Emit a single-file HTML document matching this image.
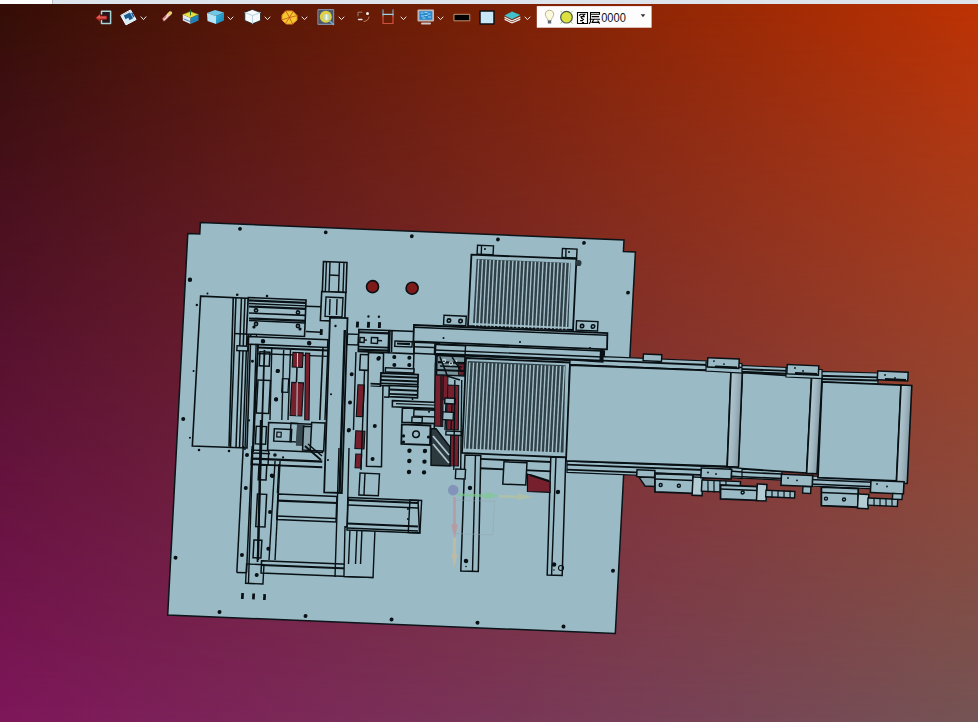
<!DOCTYPE html>
<html><head><meta charset="utf-8">
<style>
html,body{margin:0;padding:0;width:978px;height:722px;overflow:hidden;}
body{position:relative;font-family:"Liberation Sans",sans-serif;}
#bg1{position:absolute;left:0;top:0;width:978px;height:722px;background:linear-gradient(to right,#340e06,#be3204);}
#bg2{position:absolute;left:0;top:0;width:978px;height:722px;background:linear-gradient(to right,#7e165a,#745454);-webkit-mask-image:linear-gradient(to bottom,transparent,#000);mask-image:linear-gradient(to bottom,transparent,#000);}
#strip{position:absolute;left:0;top:0;width:978px;height:4px;background:#dde4ec;}
#strip0{position:absolute;left:0;top:0;width:52px;height:4px;background:#fdfdfd;border-right:1px solid #b8c4cc;}
svg{position:absolute;left:0;top:0;}
</style></head><body>
<div id="bg1"></div><div id="bg2"></div>
<div id="strip"></div><div id="strip0"></div>
<svg id="cad" width="978" height="722" viewBox="0 0 978 722">
<g transform="matrix(0.9991,0.0413,-0.0526,0.9987,188.4,222.0)" stroke="#0b1418" stroke-width="1.2" fill="none">
<path d="M12,0 L436,0 L436,11.5 L448,11.5 L448,393.5 L0,393.5 L0,11.6 L12,11.6 Z" fill="#9abac6" stroke-width="1.5"/>
<!--CAD-->
<defs><linearGradient id="rg" x1="0" y1="0" x2="1" y2="0"><stop offset="0" stop-color="#b2c8d0"/><stop offset="0.5" stop-color="#9fb6c0"/><stop offset="1" stop-color="#8299a4"/></linearGradient></defs>
<circle cx="51.9" cy="4.8" r="1.9" fill="#081014" stroke="none" stroke-width="0"/>
<circle cx="137.7" cy="4.7" r="1.9" fill="#081014" stroke="none" stroke-width="0"/>
<circle cx="223.9" cy="5" r="1.9" fill="#081014" stroke="none" stroke-width="0"/>
<circle cx="310.1" cy="4.7" r="1.9" fill="#081014" stroke="none" stroke-width="0"/>
<circle cx="396.2" cy="4.6" r="1.9" fill="#081014" stroke="none" stroke-width="0"/>
<circle cx="442.8" cy="52.5" r="1.9" fill="#081014" stroke="none" stroke-width="0"/>
<circle cx="4.6" cy="57.7" r="2.2" fill="#081014" stroke="none" stroke-width="0"/>
<circle cx="12.8" cy="82.6" r="1.2" fill="#081014" stroke="none" stroke-width="0"/>
<circle cx="52.6" cy="70.6" r="1.3" fill="#081014" stroke="none" stroke-width="0"/>
<circle cx="82.4" cy="70.7" r="1.3" fill="#081014" stroke="none" stroke-width="0"/>
<circle cx="22.8" cy="70.6" r="1" fill="#081014" stroke="none" stroke-width="0"/>
<circle cx="13" cy="148.7" r="1" fill="#081014" stroke="none" stroke-width="0"/>
<circle cx="5.2" cy="197" r="2" fill="#081014" stroke="none" stroke-width="0"/>
<circle cx="12.9" cy="215.5" r="1" fill="#081014" stroke="none" stroke-width="0"/>
<circle cx="22.6" cy="227.4" r="1.3" fill="#081014" stroke="none" stroke-width="0"/>
<circle cx="52.6" cy="227.1" r="1.3" fill="#081014" stroke="none" stroke-width="0"/>
<circle cx="71" cy="195.7" r="1.1" fill="#081014" stroke="none" stroke-width="0"/>
<circle cx="70.8" cy="230.4" r="2" fill="#081014" stroke="none" stroke-width="0"/>
<circle cx="96.9" cy="145.2" r="2" fill="#081014" stroke="none" stroke-width="0"/>
<circle cx="96.8" cy="173.8" r="2" fill="#081014" stroke="none" stroke-width="0"/>
<circle cx="97.2" cy="219.7" r="1.1" fill="#081014" stroke="none" stroke-width="0"/>
<circle cx="4.8" cy="335.9" r="2" fill="#081014" stroke="none" stroke-width="0"/>
<circle cx="51.6" cy="388.4" r="2" fill="#081014" stroke="none" stroke-width="0"/>
<circle cx="137.7" cy="388.8" r="2" fill="#081014" stroke="none" stroke-width="0"/>
<circle cx="223.8" cy="388.8" r="2" fill="#081014" stroke="none" stroke-width="0"/>
<circle cx="309.8" cy="388.4" r="2" fill="#081014" stroke="none" stroke-width="0"/>
<circle cx="395.9" cy="388.7" r="2" fill="#081014" stroke="none" stroke-width="0"/>
<circle cx="442.4" cy="330.9" r="2" fill="#081014" stroke="none" stroke-width="0"/>
<circle cx="71.3" cy="263.4" r="2" fill="#081014" stroke="none" stroke-width="0"/>
<circle cx="97.4" cy="250.3" r="2" fill="#081014" stroke="none" stroke-width="0"/>
<circle cx="96.8" cy="286.4" r="2" fill="#081014" stroke="none" stroke-width="0"/>
<circle cx="71" cy="330.5" r="2" fill="#081014" stroke="none" stroke-width="0"/>
<circle cx="97" cy="323.2" r="2" fill="#081014" stroke="none" stroke-width="0"/>
<circle cx="86.8" cy="349.9" r="2" fill="#081014" stroke="none" stroke-width="0"/>
<circle cx="141.3" cy="343.6" r="2" fill="#081014" stroke="none" stroke-width="0"/>
<circle cx="196.7" cy="330.3" r="2" fill="#081014" stroke="none" stroke-width="0"/>
<circle cx="186.8" cy="343.7" r="2" fill="#081014" stroke="none" stroke-width="0"/>
<rect x="72.3" y="368.5" width="2.7" height="5.9" fill="#081014" stroke="none"/>
<rect x="83.4" y="368.5" width="2.7" height="5.9" fill="#081014" stroke="none"/>
<rect x="94.4" y="368.6" width="2.7" height="5.9" fill="#081014" stroke="none"/>
<circle cx="187.3" cy="57" r="6" fill="#7e1a1a" stroke="#081014" stroke-width="1.6"/>
<circle cx="226.9" cy="56.9" r="6" fill="#7e1a1a" stroke="#081014" stroke-width="1.6"/>
<path d="M16.1,73.6 L67.5,73.8 L70.4,223.4 L15.7,223.6Z" stroke="#081014" stroke-width="1.6" fill="none"/>
<path d="M48.8,73.9 L52.4,222.6" stroke="#081014" stroke-width="1.6" fill="none"/>
<path d="M51.5,74 L53.9,223.1" stroke="#081014" stroke-width="1.5" fill="none"/>
<path d="M57,73.7 L59.4,222.8" stroke="#081014" stroke-width="1.5" fill="none"/>
<path d="M60.5,73.6 L62.9,222.7" stroke="#081014" stroke-width="1.5" fill="none"/>
<path d="M63.8,73.5 L66.2,222.6" stroke="#081014" stroke-width="1.5" fill="none"/>
<path d="M51.4,109.5 L66.4,109.6" stroke="#081014" stroke-width="1.6" fill="none"/>
<rect x="55.1" y="121.7" width="10.9" height="4.8" fill="#9abac6" stroke="#081014" stroke-width="1.4"/>
<path d="M66.6,221.5 L66.8,348.2" stroke="#081014" stroke-width="1.5" fill="none"/>
<path d="M75.5,221.2 L76.5,347.8" stroke="#081014" stroke-width="1.5" fill="none"/>
<path d="M66.8,348.2 L76.5,348.1" stroke="#081014" stroke-width="1.5" fill="none"/>
<path d="M73.8,105.1 L79,359.2" stroke="#081014" stroke-width="1.4" fill="none"/>
<path d="M63.8,73 L121.6,73.1 L122,109.6 L63.9,109.5Z" stroke="#081014" stroke-width="1.6" fill="#9abac6"/>
<path d="M64.7,75.9 L121.2,76" stroke="#081014" stroke-width="2.2" fill="none"/>
<path d="M64.8,78.9 L121.4,79" stroke="#081014" stroke-width="1.4" fill="none"/>
<path d="M65,81.9 L121.5,82" stroke="#081014" stroke-width="2.2" fill="none"/>
<path d="M65.3,88.4 L121.9,88.5" stroke="#081014" stroke-width="1.6" fill="none"/>
<path d="M65.6,93.9 L122.2,94" stroke="#081014" stroke-width="2.2" fill="none"/>
<path d="M65.7,95.9 L122.3,96" stroke="#081014" stroke-width="1.4" fill="none"/>
<circle cx="72.2" cy="85.6" r="2.4" fill="#081014" stroke="none" stroke-width="0"/>
<circle cx="72.2" cy="85.6" r="0.8" fill="#9abac6" stroke="none" stroke-width="0"/>
<circle cx="114.2" cy="85.9" r="2.4" fill="#081014" stroke="none" stroke-width="0"/>
<circle cx="114.2" cy="85.9" r="0.8" fill="#9abac6" stroke="none" stroke-width="0"/>
<circle cx="72.9" cy="99.1" r="2.4" fill="#081014" stroke="none" stroke-width="0"/>
<circle cx="72.9" cy="99.1" r="0.8" fill="#9abac6" stroke="none" stroke-width="0"/>
<circle cx="114.9" cy="99.4" r="2.4" fill="#081014" stroke="none" stroke-width="0"/>
<circle cx="114.9" cy="99.4" r="0.8" fill="#9abac6" stroke="none" stroke-width="0"/>
<circle cx="71" cy="102.2" r="1.6" fill="#081014" stroke="none" stroke-width="0"/>
<circle cx="117.1" cy="102.3" r="1.6" fill="#081014" stroke="none" stroke-width="0"/>
<path d="M121.9,79.3 L137.4,79.2" stroke="#081014" stroke-width="1.4" fill="none"/>
<path d="M123.2,104.5 L138.2,104.7" stroke="#081014" stroke-width="1.4" fill="none"/>
<rect x="137.1" y="101.5" width="2.8" height="5.9" fill="#081014" stroke="none"/>
<path d="M137,33.9 L160.5,33.9 L161.1,63.9 L137.4,63.9Z" stroke="#081014" stroke-width="1.6" fill="#9abac6"/>
<path d="M140,34.3 L140.4,63.8" stroke="#081014" stroke-width="1.4" fill="none"/>
<path d="M143.5,34.1 L144.1,63.6" stroke="#081014" stroke-width="1.4" fill="none"/>
<path d="M153,34.2 L153.6,63.7" stroke="#081014" stroke-width="1.4" fill="none"/>
<path d="M157.5,34 L158.1,63.6" stroke="#081014" stroke-width="1.4" fill="none"/>
<path d="M143.2,47.1 L153.2,47.2" stroke="#081014" stroke-width="1.4" fill="none"/>
<path d="M136.8,63.9 L160.9,63.9 L161.4,93 L137,93Z" stroke="#081014" stroke-width="1.6" fill="#9abac6"/>
<rect x="141.4" y="69.3" width="17" height="19.3" fill="none" stroke="#081014" stroke-width="1.4"/>
<path d="M145.5,71.1 L145.8,87.1" stroke="#081014" stroke-width="1.4" fill="none"/>
<path d="M152.5,70.8 L152.8,86.8" stroke="#081014" stroke-width="1.4" fill="none"/>
<path d="M146.4,89.6 L164,89.5 L167.5,264.4 L149.8,264.5Z" stroke="#081014" stroke-width="1.8" fill="#9abac6"/>
<path d="M161.9,101.4 L165.2,264.5" stroke="#081014" stroke-width="2.4" fill="none"/>
<circle cx="152.4" cy="97.8" r="1.2" fill="#081014" stroke="none" stroke-width="0"/>
<path d="M65.5,111.9 L145.6,111.9 L145.6,119.6 L65.6,119.6Z" stroke="#081014" stroke-width="1.6" fill="#9abac6"/>
<path d="M75.7,122.5 L146.2,122.5" stroke="#081014" stroke-width="2" fill="none"/>
<path d="M76,128.5 L146.5,128.5" stroke="#081014" stroke-width="1.4" fill="none"/>
<circle cx="80.8" cy="116" r="2.3" fill="#081014" stroke="none" stroke-width="0"/>
<circle cx="127" cy="116" r="2.3" fill="#081014" stroke="none" stroke-width="0"/>
<rect x="78.3" y="126.7" width="10" height="14" fill="none" stroke="#081014" stroke-width="1.5"/>
<rect x="77.8" y="154.9" width="12.5" height="33.1" fill="none" stroke="#081014" stroke-width="1.5"/>
<rect x="83.3" y="239.9" width="7.8" height="14.7" fill="none" stroke="#081014" stroke-width="1.5"/>
<rect x="83.3" y="268.9" width="9.2" height="32.7" fill="none" stroke="#081014" stroke-width="1.5"/>
<rect x="82.2" y="315" width="7.9" height="17.7" fill="none" stroke="#081014" stroke-width="1.5"/>
<path d="M82.7,124.7 L86.9,336.8" stroke="#081014" stroke-width="1.8" fill="none"/>
<path d="M66.2,110.4 L68.5,225.5" stroke="#081014" stroke-width="1.4" fill="none"/>
<path d="M76,120 L76.6,227.1" stroke="#081014" stroke-width="1.9" fill="none"/>
<path d="M89.9,121.4 L91.9,194.5" stroke="#081014" stroke-width="1.4" fill="none"/>
<path d="M101.9,124 L103.7,194" stroke="#081014" stroke-width="1.4" fill="none"/>
<path d="M108.7,123.7 L109.9,193.7" stroke="#081014" stroke-width="1.4" fill="none"/>
<rect x="102.1" y="152.6" width="6.3" height="13.5" fill="none" stroke="#081014" stroke-width="1.2"/>
<rect x="111.3" y="126" width="10.2" height="14.6" fill="#76202e" stroke="none"/>
<rect x="111.3" y="126" width="10.2" height="14.6" fill="none" stroke="#081014" stroke-width="1.1"/>
<rect x="111.7" y="156" width="11.7" height="33.2" fill="#76202e" stroke="none"/>
<rect x="111.7" y="156" width="11.7" height="33.2" fill="none" stroke="#081014" stroke-width="1.1"/>
<path d="M115.9,126.4 L118.5,189.4" stroke="#c8d8dc" stroke-width="0.9" fill="none"/>
<path d="M116.1,140.4 L116.4,155.4" stroke="#081014" stroke-width="1.6" fill="none"/>
<path d="M123.8,126 L128.1,126.1 L130.9,192.8 L126.6,192.8Z" stroke="#081014" stroke-width="1.1" fill="#76202e"/>
<path d="M141,119.3 L141.6,192.4" stroke="#081014" stroke-width="1.6" fill="none"/>
<path d="M146,119.1 L146.8,192.2" stroke="#081014" stroke-width="1.4" fill="none"/>
<circle cx="71.3" cy="136.4" r="1.5" fill="#081014" stroke="none" stroke-width="0"/>
<circle cx="97.3" cy="145.2" r="2" fill="#081014" stroke="none" stroke-width="0"/>
<circle cx="97" cy="173.4" r="2" fill="#081014" stroke="none" stroke-width="0"/>
<circle cx="151.5" cy="166.2" r="1" fill="#081014" stroke="none" stroke-width="0"/>
<path d="M90.7,197 L145.7,197 L146,224.7 L91.1,224.6Z" stroke="#081014" stroke-width="1.6" fill="#9abac6"/>
<rect x="96.7" y="203" width="17.4" height="12.4" fill="none" stroke="#081014" stroke-width="1.5"/>
<rect x="99.5" y="206.2" width="4.3" height="4.8" fill="none" stroke="#081014" stroke-width="1.2"/>
<rect x="113" y="196.6" width="7" height="18.7" fill="none" stroke="#081014" stroke-width="1.4"/>
<rect x="119.1" y="197.3" width="7.6" height="21.7" fill="#3a4a52" stroke="none"/>
<path d="M125.8,199.3 L137.2,199.3 L137.5,223.1 L126,223.1Z" stroke="#081014" stroke-width="1.5" fill="#8aa4ae"/>
<rect x="133.7" y="195.2" width="13.4" height="28" fill="#9abac6" stroke="#081014" stroke-width="1.5"/>
<path d="M128.2,219 L145,232.3" stroke="#081014" stroke-width="1.9" fill="none"/>
<path d="M131.1,216.9 L145.7,228.3" stroke="#081014" stroke-width="1.4" fill="none"/>
<circle cx="98.7" cy="229.2" r="1.8" fill="#081014" stroke="none" stroke-width="0"/>
<circle cx="106.9" cy="231.3" r="1.1" fill="#081014" stroke="none" stroke-width="0"/>
<circle cx="96.6" cy="249.8" r="2" fill="#081014" stroke="none" stroke-width="0"/>
<circle cx="151.9" cy="232" r="1" fill="#081014" stroke="none" stroke-width="0"/>
<circle cx="170.9" cy="201.8" r="1.8" fill="#081014" stroke="none" stroke-width="0"/>
<path d="M75.7,228.2 L93.7,228.2" stroke="#081014" stroke-width="1.5" fill="none"/>
<rect x="78.5" y="201.2" width="10.3" height="17.7" fill="none" stroke="#081014" stroke-width="1.5"/>
<path d="M82.9,194.8 L87.3,334.8" stroke="#081014" stroke-width="2.2" fill="none"/>
<rect x="75.5" y="225.2" width="16.8" height="14.3" fill="none" stroke="#081014" stroke-width="1.4"/>
<path d="M76,233.8 L146.3,233.8" stroke="#081014" stroke-width="2.2" fill="none"/>
<path d="M76.3,239.5 L146.6,239.5" stroke="#081014" stroke-width="1.8" fill="none"/>
<path d="M103.2,238 L103.2,267.1" stroke="#081014" stroke-width="1.5" fill="none"/>
<path d="M103.8,268.1 L162.8,268.1 L163.2,293.6 L103.9,293.6Z" stroke="#081014" stroke-width="1.5" fill="#9abac6"/>
<path d="M104.1,274.6 L163.2,274.6" stroke="#081014" stroke-width="2.2" fill="none"/>
<path d="M104,290.1 L163,290.1" stroke="#081014" stroke-width="1.4" fill="none"/>
<path d="M99.1,235.2 L98.3,334.4" stroke="#081014" stroke-width="1.4" fill="none"/>
<path d="M104.1,235 L104.3,334.1" stroke="#081014" stroke-width="1.4" fill="none"/>
<path d="M90.9,335.5 L202.4,335.4 L202.6,347.6 L91,347.7Z" stroke="#081014" stroke-width="1.5" fill="#9abac6"/>
<path d="M91.1,339.7 L202.6,339.6" stroke="#081014" stroke-width="1.9" fill="none"/>
<rect x="76.1" y="339.3" width="17.4" height="19.3" fill="none" stroke="#081014" stroke-width="1.4"/>
<rect x="164.9" y="105.3" width="11" height="10.6" fill="none" stroke="#081014" stroke-width="1.4"/>
<rect x="177.9" y="155.6" width="6.5" height="31.7" fill="#76202e" stroke="none"/>
<rect x="177.9" y="155.6" width="6.5" height="31.7" fill="none" stroke="#081014" stroke-width="1.1"/>
<rect x="178.2" y="201.7" width="9.1" height="17.8" fill="#76202e" stroke="none"/>
<rect x="178.2" y="201.7" width="9.1" height="17.8" fill="none" stroke="#081014" stroke-width="1.1"/>
<rect x="179.4" y="224.9" width="5.9" height="13.8" fill="#76202e" stroke="none"/>
<rect x="179.4" y="224.9" width="5.9" height="13.8" fill="none" stroke="#081014" stroke-width="1.1"/>
<circle cx="196.9" cy="196.1" r="2" fill="#081014" stroke="none" stroke-width="0"/>
<circle cx="196.4" cy="229.2" r="2" fill="#081014" stroke="none" stroke-width="0"/>
<rect x="184.6" y="243.7" width="19.5" height="22" fill="none" stroke="#081014" stroke-width="1.4"/>
<path d="M189.6,244.5 L189.7,265.5" stroke="#081014" stroke-width="1.4" fill="none"/>
<path d="M162.3,219.6 L165.1,348.6" stroke="#081014" stroke-width="1.4" fill="none"/>
<path d="M172.3,219.2 L175.9,348.2" stroke="#081014" stroke-width="1.4" fill="none"/>
<path d="M172.4,298 L202.5,298 L203.1,347.6 L174,347.8Z" stroke="#081014" stroke-width="1.4" fill="#9abac6"/>
<path d="M177.5,299.1 L177.9,335.1" stroke="#081014" stroke-width="1.4" fill="none"/>
<path d="M184.5,298.8 L184.9,334.8" stroke="#081014" stroke-width="1.4" fill="none"/>
<path d="M189.5,298.6 L189.9,334.6" stroke="#081014" stroke-width="1.4" fill="none"/>
<path d="M174.2,268.7 L244,268.8 L247.2,301.2 L174.6,301.2Z" stroke="#081014" stroke-width="1.5" fill="#9abac6"/>
<path d="M174.3,271.2 L244.1,271.3" stroke="#081014" stroke-width="1.9" fill="none"/>
<path d="M174.3,276.2 L244.4,276.3" stroke="#081014" stroke-width="1.4" fill="none"/>
<path d="M174.8,294.7 L245.3,294.8" stroke="#081014" stroke-width="1.9" fill="none"/>
<path d="M174.5,299.2 L245.6,299.2" stroke="#081014" stroke-width="1.4" fill="none"/>
<rect x="235.9" y="268.6" width="11.7" height="32.6" fill="none" stroke="#081014" stroke-width="1.4"/>
<circle cx="234.4" cy="277.7" r="1" fill="#081014" stroke="none" stroke-width="0"/>
<circle cx="234.9" cy="287.7" r="1" fill="#081014" stroke="none" stroke-width="0"/>
<path d="M175.9,100.3 L205.9,100.2 L206.4,122.2 L176.5,122.3Z" stroke="#081014" stroke-width="1.6" fill="#9abac6"/>
<path d="M176.2,103.1 L206,103" stroke="#081014" stroke-width="2.2" fill="none"/>
<path d="M176.4,117.4 L206.4,117.3" stroke="#081014" stroke-width="1.6" fill="none"/>
<path d="M176.5,120.4 L206.4,120.3" stroke="#081014" stroke-width="2.2" fill="none"/>
<rect x="177.5" y="108.3" width="4.3" height="4.8" fill="none" stroke="#081014" stroke-width="1.4"/>
<path d="M181.6,110.6 L184.6,110.6" stroke="#081014" stroke-width="1.4" fill="none"/>
<rect x="188.9" y="107.8" width="6.3" height="5.7" fill="none" stroke="#081014" stroke-width="1.4"/>
<path d="M195.1,110.6 L199.6,110.6" stroke="#081014" stroke-width="1.4" fill="none"/>
<path d="M207,100.1 L231.4,100.1 L232,122.4 L207.6,122.4Z" stroke="#081014" stroke-width="1.6" fill="#9abac6"/>
<rect x="212.6" y="110.4" width="17.3" height="5.3" fill="none" stroke="#081014" stroke-width="1.4"/>
<path d="M214.7,112.8 L227.7,112.8" stroke="#081014" stroke-width="2.2" fill="none"/>
<path d="M209.1,100.5 L209.7,121.5" stroke="#081014" stroke-width="1.6" fill="none"/>
<path d="M231.9,110.8 L257.7,110.8" stroke="#081014" stroke-width="1.5" fill="none"/>
<path d="M231.9,115.2 L257.9,115.2" stroke="#081014" stroke-width="1.5" fill="none"/>
<path d="M232.2,121.9 L258.2,121.9" stroke="#081014" stroke-width="1.5" fill="none"/>
<path d="M231.9,109.6 L233.2,168.6" stroke="#081014" stroke-width="1.5" fill="none"/>
<path d="M253.6,110.7 L256.8,207.7" stroke="#081014" stroke-width="1.5" fill="none"/>
<path d="M174.2,123 L175.8,201" stroke="#081014" stroke-width="1.4" fill="none"/>
<rect x="178.8" y="125.2" width="9.1" height="15.6" fill="none" stroke="#081014" stroke-width="1.5"/>
<path d="M183.7,140.6 L185.4,240.7" stroke="#081014" stroke-width="1.4" fill="none"/>
<path d="M186.7,123 L201.8,123 L205.7,236.6 L190.7,236.6Z" stroke="#081014" stroke-width="1.5" fill="#9abac6"/>
<circle cx="197.5" cy="128" r="1.9" fill="#081014" stroke="none" stroke-width="0"/>
<circle cx="170.9" cy="173.7" r="2" fill="#081014" stroke="none" stroke-width="0"/>
<circle cx="171.3" cy="201.2" r="2" fill="#081014" stroke="none" stroke-width="0"/>
<circle cx="196.9" cy="196.1" r="2" fill="#081014" stroke="none" stroke-width="0"/>
<circle cx="196.4" cy="229.2" r="2" fill="#081014" stroke="none" stroke-width="0"/>
<circle cx="196.9" cy="128.8" r="2" fill="#081014" stroke="none" stroke-width="0"/>
<circle cx="212.7" cy="126.5" r="2" fill="#081014" stroke="none" stroke-width="0"/>
<circle cx="227.8" cy="126.5" r="2" fill="#081014" stroke="none" stroke-width="0"/>
<circle cx="213.2" cy="134.3" r="2" fill="#081014" stroke="none" stroke-width="0"/>
<circle cx="228.1" cy="133.8" r="2" fill="#081014" stroke="none" stroke-width="0"/>
<circle cx="171.1" cy="145.4" r="2" fill="#081014" stroke="none" stroke-width="0"/>
<rect x="204.5" y="137.4" width="28.6" height="4.3" fill="#9abac6" stroke="#081014" stroke-width="1.5"/>
<path d="M200.3,142.9 L237.5,142.9 L237.7,155.2 L200.4,155.2Z" stroke="#081014" stroke-width="1.8" fill="#9abac6"/>
<path d="M200.5,146.1 L237.7,146.1" stroke="#081014" stroke-width="2" fill="none"/>
<path d="M200.7,149.9 L237.9,149.9" stroke="#081014" stroke-width="2" fill="none"/>
<path d="M200.8,153.1 L237.9,153" stroke="#081014" stroke-width="1.6" fill="none"/>
<path d="M190.4,154 L200.9,154" stroke="#081014" stroke-width="1.8" fill="none"/>
<path d="M190.5,156.3 L201,156.3" stroke="#081014" stroke-width="1.1" fill="none"/>
<path d="M209.3,155.1 L237.8,155.1 L238.1,166.2 L209.5,166.2Z" stroke="#081014" stroke-width="1.6" fill="#9abac6"/>
<path d="M209.6,159.1 L237.8,159.1" stroke="#081014" stroke-width="2" fill="none"/>
<path d="M209.6,163.4 L237.9,163.4" stroke="#081014" stroke-width="1.8" fill="none"/>
<path d="M204.6,166.8 L209.6,166.8" stroke="#081014" stroke-width="1.6" fill="none"/>
<path d="M213.2,170 L259.4,170 L259.5,176.1 L213.4,176.2Z" stroke="#081014" stroke-width="1.6" fill="#9abac6"/>
<path d="M216.9,172.8 L257.9,172.8" stroke="#081014" stroke-width="1.2" fill="none"/>
<path d="M223.5,177 L257.1,176.9 L257.4,191.2 L223.8,191.3Z" stroke="#081014" stroke-width="1.6" fill="#9abac6"/>
<rect x="235.2" y="178" width="22.4" height="6.6" fill="none" stroke="#081014" stroke-width="1.4"/>
<circle cx="250.3" cy="179.7" r="1" fill="#081014" stroke="none" stroke-width="0"/>
<rect x="233.6" y="185.6" width="10.3" height="5.6" fill="none" stroke="#081014" stroke-width="1.4"/>
<path d="M223.8,193.3 L252.5,193.3 L253,212.8 L224.3,212.8Z" stroke="#081014" stroke-width="1.8" fill="#9abac6"/>
<circle cx="238.5" cy="202.6" r="3.3" fill="none" stroke="#081014" stroke-width="1.5"/>
<circle cx="226.1" cy="204.9" r="1.6" fill="#081014" stroke="none" stroke-width="0"/>
<circle cx="226.4" cy="210.9" r="1.6" fill="#081014" stroke="none" stroke-width="0"/>
<circle cx="251.1" cy="204.9" r="1.6" fill="#081014" stroke="none" stroke-width="0"/>
<circle cx="232.8" cy="219.4" r="2.2" fill="#081014" stroke="none" stroke-width="0"/>
<circle cx="248.3" cy="219" r="2.2" fill="#081014" stroke="none" stroke-width="0"/>
<circle cx="233.2" cy="229.7" r="2.2" fill="#081014" stroke="none" stroke-width="0"/>
<circle cx="248.4" cy="229.7" r="2.2" fill="#081014" stroke="none" stroke-width="0"/>
<circle cx="233.5" cy="240.7" r="2.2" fill="#081014" stroke="none" stroke-width="0"/>
<circle cx="248.5" cy="240.4" r="2.2" fill="#081014" stroke="none" stroke-width="0"/>
<path d="M254,131.1 L262.1,131.1 L264.8,193.7 L256.6,193.7Z" stroke="#081014" stroke-width="1.1" fill="#76202e"/>
<path d="M266.8,152.2 L278.6,152.2 L280.5,196.7 L268.8,196.7Z" stroke="#081014" stroke-width="1.1" fill="#76202e"/>
<path d="M273.1,202 L281.2,201.9 L282.4,232.6 L274.3,232.7Z" stroke="#081014" stroke-width="1.1" fill="#76202e"/>
<path d="M262.8,143.3 L267.4,143.3 L268.1,167.1 L263.6,167.1Z" stroke="#081014" stroke-width="0.8" fill="#76202e"/>
<path d="M255.3,123.1 L283.3,123.2 L283.8,142.5 L255.8,142.4Z" stroke="#081014" stroke-width="1.6" fill="#7c96a0"/>
<path d="M277.3,130.7 L282.7,130.7 L283.1,141.5 L277.7,141.5Z" stroke="#081014" stroke-width="0.8" fill="#76202e"/>
<path d="M256.6,129.6 L282.7,129.5" stroke="#081014" stroke-width="2.2" fill="none"/>
<path d="M258.9,133.5 L280.9,133.6" stroke="#081014" stroke-width="1.6" fill="none"/>
<path d="M256.1,137.6 L283.1,137.5" stroke="#081014" stroke-width="1.9" fill="none"/>
<circle cx="262.6" cy="128.3" r="1.6" fill="none" stroke="#c0d4da" stroke-width="1.1"/>
<circle cx="269.7" cy="130.5" r="1.6" fill="none" stroke="#c0d4da" stroke-width="1.1"/>
<circle cx="274.6" cy="127.8" r="1.3" fill="#c0d4da" stroke="none" stroke-width="0"/>
<path d="M258.4,124.5 L266.3,142.2" stroke="#081014" stroke-width="1.6" fill="none"/>
<path d="M270.4,124 L281.1,138.6" stroke="#081014" stroke-width="1.4" fill="none"/>
<path d="M266.4,143.2 L279.6,146.6" stroke="#081014" stroke-width="1.6" fill="none"/>
<path d="M260.4,143.4 L263,193.4" stroke="#081014" stroke-width="1.2" fill="none"/>
<rect x="265.5" y="165.2" width="10.3" height="5.6" fill="#9abac6" stroke="#081014" stroke-width="1.4"/>
<path d="M266.8,171.2 L267.2,197.2" stroke="#081014" stroke-width="1.4" fill="none"/>
<path d="M272.8,171 L273.2,197" stroke="#081014" stroke-width="1.2" fill="none"/>
<rect x="264.3" y="179.3" width="10.4" height="7.6" fill="#9abac6" stroke="#081014" stroke-width="1.2"/>
<rect x="268.3" y="198.2" width="15.9" height="3.8" fill="#9abac6" stroke="#081014" stroke-width="1.4"/>
<path d="M253.2,196.4 L258.2,196.4 L273.1,214 L274.1,233 L255.1,233Z" stroke="#081014" stroke-width="1.4" fill="#2c3a40"/>
<path d="M255.5,203.7 L272.5,222" stroke="#b0c6ce" stroke-width="1.8" fill="none"/>
<path d="M256,211.7 L272.9,230" stroke="#b0c6ce" stroke-width="1.8" fill="none"/>
<path d="M274.4,146.9 L278.1,236.8" stroke="#081014" stroke-width="1.4" fill="none"/>
<path d="M281.3,146.6 L285,236.5" stroke="#081014" stroke-width="1.4" fill="none"/>
<rect x="177" y="99.8" width="30.2" height="21.8" fill="none" stroke="none" stroke-width="0"/>
<rect x="172.8" y="92.5" width="2.9" height="5.9" fill="#081014" stroke="none"/>
<rect x="183.8" y="92.3" width="2.9" height="5.9" fill="#081014" stroke="none"/>
<rect x="194.8" y="92.1" width="2.9" height="5.9" fill="#081014" stroke="none"/>
<circle cx="184.8" cy="87" r="1.2" fill="#081014" stroke="none" stroke-width="0"/>
<circle cx="195.3" cy="86.8" r="1.2" fill="#081014" stroke="none" stroke-width="0"/>
<rect x="260.2" y="82.7" width="22.3" height="9.6" fill="none" stroke="#081014" stroke-width="1.4"/>
<circle cx="265.4" cy="87.7" r="2.5" fill="#081014" stroke="none" stroke-width="0"/>
<circle cx="277" cy="87.7" r="2.5" fill="#081014" stroke="none" stroke-width="0"/>
<circle cx="265.4" cy="87.7" r="0.9" fill="#9abac6" stroke="none" stroke-width="0"/>
<circle cx="277" cy="87.7" r="0.9" fill="#9abac6" stroke="none" stroke-width="0"/>
<rect x="392.9" y="82.7" width="21.4" height="9.3" fill="none" stroke="#081014" stroke-width="1.4"/>
<circle cx="398.6" cy="87.7" r="2.5" fill="#081014" stroke="none" stroke-width="0"/>
<circle cx="409.6" cy="87.7" r="2.5" fill="#081014" stroke="none" stroke-width="0"/>
<circle cx="398.6" cy="87.7" r="0.9" fill="#9abac6" stroke="none" stroke-width="0"/>
<circle cx="409.6" cy="87.7" r="0.9" fill="#9abac6" stroke="none" stroke-width="0"/>
<path d="M284.4,21 L389.5,20.9 L389.8,92 L284.7,92.2Z" stroke="#081014" stroke-width="1.8" fill="#9abac6"/>
<path d="M289.8,25.1 L383.8,25.2 L385.1,89.2 L289.6,89.2Z" stroke="none" stroke-width="0" fill="#2e4048"/>
<path d="M292,25.5 L292.1,92.1" stroke="#a8c0ca" stroke-width="1.4" fill="none"/>
<path d="M295.8,25.5 L295.9,92" stroke="#a8c0ca" stroke-width="1.4" fill="none"/>
<path d="M299.6,25.5 L299.7,92" stroke="#a8c0ca" stroke-width="1.4" fill="none"/>
<path d="M303.4,25.5 L303.5,92" stroke="#a8c0ca" stroke-width="1.4" fill="none"/>
<path d="M307.1,25.4 L307.2,92" stroke="#a8c0ca" stroke-width="1.4" fill="none"/>
<path d="M310.9,25.4 L311,92" stroke="#a8c0ca" stroke-width="1.4" fill="none"/>
<path d="M314.7,25.4 L314.8,92" stroke="#a8c0ca" stroke-width="1.4" fill="none"/>
<path d="M318.5,25.4 L318.6,92" stroke="#a8c0ca" stroke-width="1.4" fill="none"/>
<path d="M322.3,25.4 L322.4,92" stroke="#a8c0ca" stroke-width="1.4" fill="none"/>
<path d="M326.1,25.4 L326.2,92" stroke="#a8c0ca" stroke-width="1.4" fill="none"/>
<path d="M329.8,25.4 L329.9,92" stroke="#a8c0ca" stroke-width="1.4" fill="none"/>
<path d="M333.6,25.4 L333.7,92" stroke="#a8c0ca" stroke-width="1.4" fill="none"/>
<path d="M337.4,25.4 L337.5,92" stroke="#a8c0ca" stroke-width="1.4" fill="none"/>
<path d="M341.2,25.4 L341.3,92" stroke="#a8c0ca" stroke-width="1.4" fill="none"/>
<path d="M345,25.4 L345.1,92" stroke="#a8c0ca" stroke-width="1.4" fill="none"/>
<path d="M348.7,25.4 L348.9,92" stroke="#a8c0ca" stroke-width="1.4" fill="none"/>
<path d="M352.5,25.4 L352.6,92" stroke="#a8c0ca" stroke-width="1.4" fill="none"/>
<path d="M356.3,25.4 L356.4,91.9" stroke="#a8c0ca" stroke-width="1.4" fill="none"/>
<path d="M360.1,25.4 L360.2,91.9" stroke="#a8c0ca" stroke-width="1.4" fill="none"/>
<path d="M363.9,25.4 L364,91.9" stroke="#a8c0ca" stroke-width="1.4" fill="none"/>
<path d="M367.7,25.3 L367.8,91.9" stroke="#a8c0ca" stroke-width="1.4" fill="none"/>
<path d="M371.4,25.3 L371.5,91.9" stroke="#a8c0ca" stroke-width="1.4" fill="none"/>
<path d="M375.2,25.3 L375.3,91.9" stroke="#a8c0ca" stroke-width="1.4" fill="none"/>
<path d="M379,25.3 L379.1,91.9" stroke="#a8c0ca" stroke-width="1.4" fill="none"/>
<path d="M382.8,25.3 L382.9,91.9" stroke="#a8c0ca" stroke-width="1.4" fill="none"/>
<rect x="290" y="11.3" width="16" height="8.8" fill="none" stroke="#081014" stroke-width="1.4"/>
<rect x="375" y="11.1" width="14.6" height="8.8" fill="none" stroke="#081014" stroke-width="1.4"/>
<path d="M378.5,11.2 L378.8,20.4" stroke="#081014" stroke-width="1.4" fill="none"/>
<path d="M294,11.4 L294.2,20.6" stroke="#081014" stroke-width="1.4" fill="none"/>

<circle cx="391.8" cy="24.9" r="3" fill="#2a3a40" stroke="none" stroke-width="0"/>
<circle cx="297.6" cy="14.7" r="1" fill="#081014" stroke="none" stroke-width="0"/>
<circle cx="381.7" cy="14.3" r="1" fill="#081014" stroke="none" stroke-width="0"/>
<path d="M230.7,93.6 L424.3,93.6 L424.8,110 L231,110.1Z" stroke="#081014" stroke-width="1.8" fill="#9abac6"/>
<path d="M230.9,95.9 L424.4,95.9" stroke="#081014" stroke-width="1.4" fill="none"/>
<circle cx="260.9" cy="105.4" r="1" fill="#081014" stroke="none" stroke-width="0"/>
<circle cx="337.5" cy="106.2" r="1" fill="#081014" stroke="none" stroke-width="0"/>
<circle cx="407.7" cy="109.3" r="1" fill="#081014" stroke="none" stroke-width="0"/>
<path d="M252.7,111.7 L420.4,111.8 L420.4,121.3 L252.7,121.2Z" stroke="#081014" stroke-width="1.6" fill="#9abac6"/>
<path d="M253,117.7 L420.7,117.8" stroke="#081014" stroke-width="1.4" fill="none"/>
<path d="M253.3,122.2 L420.9,122.3" stroke="#081014" stroke-width="1.9" fill="none"/>
<rect x="253.5" y="112.2" width="29.8" height="10.3" fill="none" stroke="#081014" stroke-width="1.4"/>
<rect x="417.8" y="110.9" width="5.2" height="12.8" fill="#081014" stroke="none"/>
<path d="M284.4,124.4 L388.5,124.6 L391,219.6 L285.4,219.5Z" stroke="#081014" stroke-width="1.8" fill="#9abac6"/>
<path d="M286.4,127.3 L384.2,127.5 L386.7,214.8 L287,215Z" stroke="none" stroke-width="0" fill="#2e4048"/>
<path d="M288.4,128.8 L288.5,215.9" stroke="#a8c0ca" stroke-width="1.4" fill="none"/>
<path d="M292.2,128.7 L292.3,215.9" stroke="#a8c0ca" stroke-width="1.4" fill="none"/>
<path d="M296,128.7 L296.1,215.9" stroke="#a8c0ca" stroke-width="1.4" fill="none"/>
<path d="M299.8,128.7 L299.9,215.8" stroke="#a8c0ca" stroke-width="1.4" fill="none"/>
<path d="M303.6,128.7 L303.6,215.8" stroke="#a8c0ca" stroke-width="1.4" fill="none"/>
<path d="M307.3,128.7 L307.4,215.8" stroke="#a8c0ca" stroke-width="1.4" fill="none"/>
<path d="M311.1,128.7 L311.2,215.8" stroke="#a8c0ca" stroke-width="1.4" fill="none"/>
<path d="M314.9,128.7 L315,215.8" stroke="#a8c0ca" stroke-width="1.4" fill="none"/>
<path d="M318.7,128.7 L318.8,215.8" stroke="#a8c0ca" stroke-width="1.4" fill="none"/>
<path d="M322.5,128.7 L322.6,215.8" stroke="#a8c0ca" stroke-width="1.4" fill="none"/>
<path d="M326.3,128.7 L326.3,215.8" stroke="#a8c0ca" stroke-width="1.4" fill="none"/>
<path d="M330,128.7 L330.1,215.8" stroke="#a8c0ca" stroke-width="1.4" fill="none"/>
<path d="M333.8,128.7 L333.9,215.8" stroke="#a8c0ca" stroke-width="1.4" fill="none"/>
<path d="M337.6,128.7 L337.7,215.8" stroke="#a8c0ca" stroke-width="1.4" fill="none"/>
<path d="M341.4,128.7 L341.5,215.8" stroke="#a8c0ca" stroke-width="1.4" fill="none"/>
<path d="M345.2,128.7 L345.3,215.8" stroke="#a8c0ca" stroke-width="1.4" fill="none"/>
<path d="M349,128.7 L349,215.8" stroke="#a8c0ca" stroke-width="1.4" fill="none"/>
<path d="M352.7,128.6 L352.8,215.8" stroke="#a8c0ca" stroke-width="1.4" fill="none"/>
<path d="M356.5,128.6 L356.6,215.8" stroke="#a8c0ca" stroke-width="1.4" fill="none"/>
<path d="M360.3,128.6 L360.4,215.7" stroke="#a8c0ca" stroke-width="1.4" fill="none"/>
<path d="M364.1,128.6 L364.2,215.7" stroke="#a8c0ca" stroke-width="1.4" fill="none"/>
<path d="M367.9,128.6 L368,215.7" stroke="#a8c0ca" stroke-width="1.4" fill="none"/>
<path d="M371.7,128.6 L371.7,215.7" stroke="#a8c0ca" stroke-width="1.4" fill="none"/>
<path d="M375.4,128.6 L375.5,215.7" stroke="#a8c0ca" stroke-width="1.4" fill="none"/>
<path d="M379.2,128.6 L379.3,215.7" stroke="#a8c0ca" stroke-width="1.4" fill="none"/>
<path d="M383,128.6 L383.1,215.7" stroke="#a8c0ca" stroke-width="1.4" fill="none"/>
<path d="M288.5,221.4 L304.3,221.2 L307.9,337.2 L290.4,337.4Z" stroke="#081014" stroke-width="1.5" fill="#9abac6"/>
<path d="M299,221.9 L302.1,337" stroke="#081014" stroke-width="1.4" fill="none"/>
<circle cx="295.1" cy="327.2" r="2.3" fill="#081014" stroke="none" stroke-width="0"/>
<circle cx="295.4" cy="332.7" r="0.8" fill="#081014" stroke="none" stroke-width="0"/>
<path d="M374.3,219.8 L389.3,219.7 L391.9,337.8 L376.9,337.9Z" stroke="#081014" stroke-width="1.5" fill="#9abac6"/>
<path d="M379.5,220.1 L381.3,337.7" stroke="#081014" stroke-width="1.4" fill="none"/>
<circle cx="383.2" cy="327.1" r="2.3" fill="#081014" stroke="none" stroke-width="0"/>
<circle cx="383.4" cy="332.6" r="0.8" fill="#081014" stroke="none" stroke-width="0"/>
<circle cx="390.3" cy="330.3" r="2.5" fill="none" stroke="#081014" stroke-width="1.1"/>
<circle cx="295.2" cy="254.1" r="2.2" fill="#081014" stroke="none" stroke-width="0"/>
<circle cx="383.3" cy="254.5" r="2.2" fill="#081014" stroke="none" stroke-width="0"/>
<path d="M303.7,224.7 L374.8,224.8" stroke="#081014" stroke-width="1.8" fill="none"/>
<path d="M304.2,234 L375.3,234.1" stroke="#081014" stroke-width="1.8" fill="none"/>
<rect x="327.8" y="226.5" width="23" height="22.4" fill="#9abac6" stroke="#081014" stroke-width="1.5"/>
<path d="M351.9,237.8 L374.8,244.5 L375.4,255.3 L352.8,255.3Z" stroke="#081014" stroke-width="1.2" fill="#76202e"/>
<path d="M354.5,238.7 L373.8,243.9" stroke="#081014" stroke-width="1.9" fill="none"/>
<rect x="280.1" y="235.7" width="9.7" height="9.6" fill="#9abac6" stroke="#081014" stroke-width="1.4"/>
<path d="M421.1,117.3 L526.2,117.4 L526.7,126.9 L388.6,127.1 L388.4,122.1 L421.4,122.8Z" stroke="#081014" stroke-width="1.2" fill="#9abac6"/>
<path d="M421.4,121.3 L526.5,121.4" stroke="#081014" stroke-width="1.8" fill="none"/>
<path d="M388.6,127.1 L526.7,126.9" stroke="#081014" stroke-width="2" fill="none"/>
<path d="M557.4,120.6 L606,120.6 L606.5,130.1 L557.9,129.1Z" stroke="#081014" stroke-width="1.2" fill="#9abac6"/>
<path d="M557.6,124.1 L606.2,124.1" stroke="#081014" stroke-width="1.8" fill="none"/>
<path d="M557.8,126.9 L606.3,126.9" stroke="#081014" stroke-width="2" fill="none"/>
<path d="M637.2,123.3 L696.7,122.4 L697.2,133.4 L637.7,133.8Z" stroke="#081014" stroke-width="1.2" fill="#9abac6"/>
<path d="M637.4,127.6 L696.9,126.7" stroke="#081014" stroke-width="1.8" fill="none"/>
<path d="M637.6,130.8 L697.1,129.9" stroke="#081014" stroke-width="2" fill="none"/>
<path d="M390.7,223.2 L553.8,222.9 L554.4,234.4 L391.3,234.6Z" stroke="#081014" stroke-width="1.2" fill="#9abac6"/>
<path d="M390.9,226.7 L554,226.4" stroke="#081014" stroke-width="1.8" fill="none"/>
<path d="M391.1,231.8 L554.3,231.6" stroke="#081014" stroke-width="1.8" fill="none"/>
<path d="M561.9,224.1 L605.9,224.3 L606.4,233.3 L562.4,233.1Z" stroke="#081014" stroke-width="1.2" fill="#9abac6"/>
<path d="M562.1,227.1 L606.1,227.3" stroke="#081014" stroke-width="1.6" fill="none"/>
<path d="M562.3,231.6 L606.3,231.8" stroke="#081014" stroke-width="1.6" fill="none"/>
<path d="M634.2,228.1 L697.2,228.3 L697.8,238.3 L634.7,238.1Z" stroke="#081014" stroke-width="1.2" fill="#9abac6"/>
<path d="M634.4,231.6 L697.4,231.8" stroke="#081014" stroke-width="1.6" fill="none"/>
<path d="M634.6,236.1 L697.7,236.3" stroke="#081014" stroke-width="1.6" fill="none"/>
<path d="M388.6,127.1 L549.8,126.8 L551,221.9 L389.7,223.2Z" stroke="#081014" stroke-width="1.8" fill="#9abac6"/>
<path d="M561.1,127.5 L630.6,129.3 L630.7,225.4 L561.9,223.6Z" stroke="#081014" stroke-width="1.8" fill="#9abac6"/>
<path d="M641.2,133.5 L720.3,133.6 L720.8,229.5 L642.2,229.5Z" stroke="#081014" stroke-width="1.8" fill="#9abac6"/>
<path d="M549.8,126.8 L561.1,126.8 L562.3,222.2 L551,222.1Z" stroke="#081014" stroke-width="1.6" fill="url(#rg)"/>
<path d="M630.6,129.3 L641,129.4 L641.1,225.7 L630.7,225.6Z" stroke="#081014" stroke-width="1.6" fill="url(#rg)"/>
<path d="M720.3,133.4 L731.1,133.5 L731.7,231.6 L720.9,231.5Z" stroke="#081014" stroke-width="1.6" fill="url(#rg)"/>
<rect x="461.4" y="113.1" width="18.4" height="6.7" fill="#9abac6" stroke="#081014" stroke-width="1.4"/>
<path d="M524.3,118.5 L560.3,118.5 L560.8,128 L524.8,127.5Z" stroke="#081014" stroke-width="1.2" fill="#9abac6"/>
<path d="M524.5,122.5 L560.5,122.5" stroke="#081014" stroke-width="1.6" fill="none"/>
<rect x="525.9" y="114.2" width="31.5" height="9.3" fill="#9abac6" stroke="#081014" stroke-width="1.5"/>
<path d="M604.5,121.2 L640.6,121.2 L641,130.2 L605,130.2Z" stroke="#081014" stroke-width="1.2" fill="#9abac6"/>
<rect x="605.6" y="117.7" width="31.6" height="9.3" fill="#9abac6" stroke="#081014" stroke-width="1.5"/>
<rect x="696.3" y="120.4" width="30.5" height="8.8" fill="#9abac6" stroke="#081014" stroke-width="1.5"/>
<circle cx="532.2" cy="117.2" r="0.9" fill="#081014" stroke="none" stroke-width="0"/>
<circle cx="542.4" cy="119.8" r="0.9" fill="#081014" stroke="none" stroke-width="0"/>
<circle cx="613.5" cy="120.8" r="0.9" fill="#081014" stroke="none" stroke-width="0"/>
<circle cx="621.7" cy="123.5" r="0.9" fill="#081014" stroke="none" stroke-width="0"/>
<circle cx="703.8" cy="124.1" r="0.9" fill="#081014" stroke="none" stroke-width="0"/>
<circle cx="713.9" cy="126.7" r="0.9" fill="#081014" stroke="none" stroke-width="0"/>
<path d="M533.5,122.6 L555.6,122.7" stroke="#081014" stroke-width="2.2" fill="none"/>
<path d="M613.8,125.8 L635.8,125.9" stroke="#081014" stroke-width="2.2" fill="none"/>
<path d="M704,128.1 L725,128.2" stroke="#081014" stroke-width="2.2" fill="none"/>
<path d="M553.8,222.9 L565.9,223.4 L566.4,233.4 L554.3,232.9Z" stroke="#081014" stroke-width="1.2" fill="#9abac6"/>
<path d="M554,226.4 L566,226.9" stroke="#081014" stroke-width="1.6" fill="none"/>
<path d="M554.3,231.4 L566.3,231.9" stroke="#081014" stroke-width="1.6" fill="none"/>
<path d="M463.4,236.2 L479.4,236 L479.9,245 L469.9,244.9Z" stroke="#081014" stroke-width="1.4" fill="#8aa6b0"/>
<rect x="461.1" y="229" width="17.9" height="6.9" fill="#9abac6" stroke="#081014" stroke-width="1.5"/>
<path d="M479.2,232 L517.3,231.9 L518.2,250.3 L480.2,250.5Z" stroke="#081014" stroke-width="1.8" fill="#9abac6"/>
<path d="M479.5,237.5 L517.6,237.4" stroke="#081014" stroke-width="1.6" fill="none"/>
<circle cx="485.5" cy="243.3" r="1.5" fill="none" stroke="#081014" stroke-width="1.4"/>
<circle cx="503.7" cy="243.3" r="1.5" fill="none" stroke="#081014" stroke-width="1.4"/>
<rect x="517.4" y="233.9" width="10" height="18.3" fill="#b4ccd4" stroke="#081014" stroke-width="1.5"/>
<rect x="526.5" y="236.6" width="38.6" height="11.1" fill="#9abac6" stroke="#081014" stroke-width="1.5"/>
<path d="M532.5,236.8 L533.2,248.8" stroke="#081014" stroke-width="1.2" fill="none"/>
<path d="M538.5,236.6 L539.2,248.6" stroke="#081014" stroke-width="1.2" fill="none"/>
<path d="M544.5,236.3 L545.2,248.3" stroke="#081014" stroke-width="1.2" fill="none"/>
<path d="M550.5,236.1 L551.1,248.1" stroke="#081014" stroke-width="1.2" fill="none"/>
<rect x="525.2" y="224.6" width="30.4" height="9.8" fill="#9abac6" stroke="#081014" stroke-width="1.6"/>
<circle cx="532.1" cy="228.8" r="0.9" fill="#081014" stroke="none" stroke-width="0"/>
<circle cx="540.2" cy="230" r="0.9" fill="#081014" stroke="none" stroke-width="0"/>
<path d="M545.3,240.8 L582.1,240.8 L582.8,254.6 L546,254.6Z" stroke="#081014" stroke-width="1.8" fill="#9abac6"/>
<path d="M545.5,244.8 L582.3,244.8" stroke="#081014" stroke-width="1.4" fill="none"/>
<circle cx="567.8" cy="247.4" r="1.5" fill="none" stroke="#081014" stroke-width="1.4"/>
<rect x="582" y="238.3" width="9.6" height="16.6" fill="#b4ccd4" stroke="#081014" stroke-width="1.5"/>
<rect x="591" y="244.2" width="28.9" height="6.5" fill="#9abac6" stroke="#081014" stroke-width="1.4"/>
<path d="M597,244.2 L597.4,251.7" stroke="#081014" stroke-width="1.2" fill="none"/>
<path d="M603,243.9 L603.4,251.4" stroke="#081014" stroke-width="1.2" fill="none"/>
<path d="M609,243.7 L609.4,251.2" stroke="#081014" stroke-width="1.2" fill="none"/>
<path d="M615,243.4 L615.4,250.9" stroke="#081014" stroke-width="1.2" fill="none"/>
<rect x="605.6" y="227.5" width="31.3" height="11" fill="#9abac6" stroke="#081014" stroke-width="1.6"/>
<circle cx="612.3" cy="231" r="0.9" fill="#081014" stroke="none" stroke-width="0"/>
<circle cx="621.4" cy="233.1" r="0.9" fill="#081014" stroke="none" stroke-width="0"/>
<rect x="627.7" y="238.9" width="8" height="6.6" fill="#9abac6" stroke="#081014" stroke-width="1.4"/>
<path d="M646.1,238.8 L683,238.8 L683.9,257.3 L647.1,257.3Z" stroke="#081014" stroke-width="1.8" fill="#9abac6"/>
<path d="M646.4,244.1 L683.3,244.1" stroke="#081014" stroke-width="1.5" fill="none"/>
<circle cx="651.3" cy="250.1" r="1.5" fill="none" stroke="#081014" stroke-width="1.4"/>
<circle cx="669.4" cy="250.2" r="1.5" fill="none" stroke="#081014" stroke-width="1.4"/>
<rect x="683.3" y="244.1" width="10.6" height="14.3" fill="#b4ccd4" stroke="#081014" stroke-width="1.5"/>
<rect x="693.3" y="247.7" width="29.7" height="7.2" fill="#9abac6" stroke="#081014" stroke-width="1.4"/>
<path d="M699.3,247.7 L699.7,255.6" stroke="#081014" stroke-width="1.2" fill="none"/>
<path d="M705.3,247.5 L705.7,255.4" stroke="#081014" stroke-width="1.2" fill="none"/>
<path d="M711.2,247.2 L711.7,255.1" stroke="#081014" stroke-width="1.2" fill="none"/>
<path d="M717.2,247 L717.7,254.9" stroke="#081014" stroke-width="1.2" fill="none"/>
<rect x="695.3" y="229.9" width="33.1" height="12.3" fill="#9abac6" stroke="#081014" stroke-width="1.6"/>
<circle cx="701.5" cy="233.3" r="0.9" fill="#081014" stroke="none" stroke-width="0"/>
<circle cx="711.6" cy="235.4" r="0.9" fill="#081014" stroke="none" stroke-width="0"/>
<rect x="717.7" y="242.1" width="9.6" height="5.7" fill="#9abac6" stroke="#081014" stroke-width="1.4"/>
<g opacity="0.65">
<path d="M280.9,266.7 L320.6,266.6" stroke="#8fa8b2" stroke-width="0.8" fill="none"/>
<path d="M320.5,265.1 L320.7,300.1" stroke="#8fa8b2" stroke-width="0.8" fill="none"/>
<path d="M282.6,300.2 L320.7,300.1" stroke="#8fa8b2" stroke-width="0.8" fill="none"/>
<path d="M280.2,263.8 L281.9,294.7" stroke="#c49098" stroke-width="3" fill="none"/>
<path d="M278.2,290.9 L285.2,291.1 L282.4,304.7Z" stroke="none" stroke-width="0" fill="#c88c90"/>
<path d="M282.4,304.7 L283.2,324.7" stroke="#cdbd98" stroke-width="3.2" fill="none"/>
<path d="M280.2,320.8 L286.2,320.9 L283.7,334.7Z" stroke="none" stroke-width="0" fill="#cdbd98"/>
<path d="M283.6,261.4 L313.6,261.2" stroke="#7ccc8c" stroke-width="2.7" fill="none"/>
<path d="M310.4,257 L310.8,265 L324.6,260.7Z" stroke="none" stroke-width="0" fill="#7ccc8c"/>
<path d="M324.6,261.2 L345.6,261.1" stroke="#b8c49c" stroke-width="2.7" fill="none"/>
<path d="M343.5,257.6 L343.8,264.1 L358.6,260.5Z" stroke="none" stroke-width="0" fill="#b8c49c"/>
<circle cx="278.6" cy="257" r="5.3" fill="#7880b4" stroke="none" stroke-width="0"/>
</g>
<!--/CAD-->
</g>
</svg>
<svg width="978" height="32" viewBox="0 0 978 32" style="position:absolute;left:0;top:0">
<defs>
<linearGradient id="gArrow" x1="0" y1="0" x2="0" y2="1"><stop offset="0" stop-color="#ff9080"/><stop offset="1" stop-color="#b01010"/></linearGradient>
<linearGradient id="gCubeR" x1="0" y1="0" x2="1" y2="1"><stop offset="0" stop-color="#40b8e0"/><stop offset="1" stop-color="#1080b0"/></linearGradient>
</defs>
<g stroke-linecap="round" stroke-linejoin="round">
<!-- exit icon -->
<rect x="101" y="11" width="10" height="12.5" fill="#2a1418" stroke="none"/>
<path d="M101.5,14 V11.2 H110.6 V23.4 H101.5 V20.5" stroke="#a8d4d8" stroke-width="1.5" fill="none"/>
<path d="M96,17.7 L100,14.5 V16.2 H106.5 V19.2 H100 V21 Z" fill="url(#gArrow)" stroke="#c02020" stroke-width="0.6"/>
<!-- card icon -->
<path d="M130.7,10.3 L136.1,19.5 L126,24.9 L120.9,15.7 Z" fill="#d8eef8" stroke="#f4f8ff" stroke-width="1"/>
<path d="M123.8,15.6 L130,12.5 L133,18.3 L129.5,20.2 L128.3,17.8 L125.5,19.3 Z" fill="#1a5a90"/>
<path d="M131,13 L132.4,12.4 L134.5,16.8 L133.2,17.5 Z" fill="#1a5a90"/>
<path d="M141,16.8 L143.5,19.6 L146,16.8" stroke="#f0f0f0" stroke-width="0.95" fill="none"/>
<!-- pencil -->
<path d="M163.5,21 L162.5,18.5 L169.5,11.5 L172,13.5 L165,20.5 Z" fill="#f0e0e0" stroke="#b04040" stroke-width="0.6"/>
<path d="M167,14 L169.5,11.5 Q172,10.5 172.2,13.2 L169.5,16 Z" fill="#e8d070"/>
<path d="M163.6,18.8 L166.2,16.2" stroke="#d03030" stroke-width="1"/>
<!-- box with yellow top -->
<path d="M182.8,14.5 L190.5,11.5 L198.5,14.5 L190.5,18 Z" fill="#e8e040" stroke="#808020" stroke-width="0.5"/>
<path d="M182.8,14.5 L190.5,18 L190.5,24 L182.8,20.5 Z" fill="#e0e8f0"/>
<path d="M190.5,18 L198.5,14.5 L198.5,20.5 L190.5,24 Z" fill="#1a8ac0"/>
<path d="M184,19 L190,21.5 M191,21.5 L197.5,19" stroke="#3070a0" stroke-width="0.8"/>
<path d="M190.5,10 V15" stroke="#2a6a30" stroke-width="1"/>
<!-- blue cube -->
<path d="M207,13 L215,10 L224,12.5 L216,16 Z" fill="#70c8e8"/>
<path d="M207,13 L216,16 L216,24 L207.5,21 Z" fill="#b8e4f8"/>
<path d="M216,16 L224,12.5 L224,20.5 L216,24 Z" fill="url(#gCubeR)"/>
<path d="M228,17 L230.5,19.6 L233,17" stroke="#f0f0f0" stroke-width="0.95" fill="none"/>
<!-- white cube -->
<path d="M252.5,9.5 L260.5,12.5 L260.5,20.5 L252.5,23.8 L244.8,20.5 L244.8,12.5 Z" fill="#f6fafc" stroke="#202020" stroke-width="0.8"/>
<path d="M244.8,12.5 L252.5,15.5 L260.5,12.5 M252.5,15.5 V23.8" stroke="#a8c8d8" stroke-width="0.8" fill="none"/>
<path d="M265,17 L267.5,19.6 L270,17" stroke="#f0f0f0" stroke-width="0.95" fill="none"/>
<!-- yellow octagon -->
<path d="M286,11 L292.5,11 L297,15.5 L297,20 L292.5,24 L286,24 L282,20 L282,15.5 Z" fill="#f4c830" stroke="#e89020" stroke-width="1"/>
<path d="M289.5,17.5 L286,11.2 M289.5,17.5 L296.5,15.8 M289.5,17.5 L292.5,23.8 M289.5,17.5 L282.2,19.8 M289.5,17.5 L293,11.5 M289.5,17.5 L285.5,23.5" stroke="#c04010" stroke-width="0.7"/>
<path d="M302,17 L304.5,19.6 L307,17" stroke="#f0f0f0" stroke-width="0.95" fill="none"/>
<!-- zoom -->
<rect x="318.3" y="9.6" width="15.4" height="14.8" fill="#4a5a6a" stroke="#8898b0" stroke-width="1"/>
<circle cx="325.8" cy="16.8" r="6" fill="#e0d048"/>
<circle cx="326.5" cy="17.2" r="3.2" fill="#b8d8c0"/>
<rect x="325.6" y="14.5" width="1.8" height="5.5" fill="#f8f8e0"/>
<path d="M329.5,21 L333.5,24.5" stroke="#70b0e0" stroke-width="1.5"/>
<path d="M339,17 L341.5,19.6 L344,17" stroke="#f0f0f0" stroke-width="0.95" fill="none"/>
<!-- rotate icon -->
<path d="M358,16 V12.2 H362" stroke="#a08070" stroke-width="1" fill="none"/>
<circle cx="367.5" cy="13.6" r="1.5" fill="#f0f0f0"/>
<path d="M358.5,19.5 H362" stroke="#e0e0e0" stroke-width="1.4"/>
<path d="M369,17 Q368.5,21 364,21.5" stroke="#c08060" stroke-width="1" fill="none"/>
<!-- H icon -->
<path d="M383,9.8 V16 M393,9.8 V16" stroke="#80a8b8" stroke-width="1.2"/>
<path d="M383,16 V23.5 H393 V16" stroke="#d05040" stroke-width="1.2" fill="none"/>
<path d="M383,14.3 H393" stroke="#a0d0e0" stroke-width="1.2"/>
<path d="M401,17 L403.5,19.6 L406,17" stroke="#f0f0f0" stroke-width="0.95" fill="none"/>
<!-- monitor -->
<rect x="417.5" y="9.5" width="16.5" height="12" fill="#c0b8b8" rx="1"/>
<rect x="419.3" y="11.2" width="13" height="8.6" fill="#2a8ad0"/>
<path d="M421,13 h2 M425,12.5 h2 M428,14 h2 M421.5,16 h2 M425,15.5 h2 M428.5,17 h2 M423,18 h2" stroke="#a0d8f8" stroke-width="1.2"/>
<path d="M422,23.5 H430" stroke="#d0c8c8" stroke-width="2"/>
<path d="M438,17 L440.5,19.6 L443,17" stroke="#f0f0f0" stroke-width="0.95" fill="none"/>
<!-- black rect -->
<rect x="454.3" y="14.3" width="15.5" height="6.5" fill="#000" stroke="#c09070" stroke-width="1"/>
<!-- light square -->
<rect x="480" y="11" width="14" height="13" fill="#c8e8f8" stroke="#101010" stroke-width="1.5"/>
<!-- layers -->
<path d="M504.5,18.5 L512,22.3 L520.3,18.5 L520.3,20 L512,23.5 L504.5,20 Z" fill="#f0f0f0"/>
<path d="M504.5,16.5 L512,20.3 L520.3,16.5 L520.3,18 L512,21.5 L504.5,18 Z" fill="#e8f0f0"/>
<path d="M504.5,15.5 L512,11.5 L520.3,15 L512,19.3 Z" fill="#40c0c8"/>
<path d="M525,17 L527.5,19.6 L530,17" stroke="#f0f0f0" stroke-width="0.95" fill="none"/>
</g>
<!-- combo -->
<rect x="536.8" y="6.1" width="114.8" height="21.6" fill="#fdfdfd"/>
<path d="M549.5,10.3 C545,10.3 544.5,15 546.5,17.5 C547.5,18.7 547.8,19.5 547.8,20.5 L551.2,20.5 C551.2,19.5 551.5,18.7 552.5,17.5 C554.5,15 554,10.3 549.5,10.3 Z" fill="#fcf8dc" stroke="#b4ac80" stroke-width="0.9"/>
<rect x="547.8" y="20.5" width="3.4" height="3" fill="#606878"/>
<circle cx="566.5" cy="17.2" r="5.8" fill="#dce040" stroke="#485848" stroke-width="1.2"/>
<path d="M560.5,11 l1.5,1.5 M572.5,11 l-1.5,1.5 M560.5,23.5 l1.5,-1.5 M572.5,23.5 l-1.5,-1.5" stroke="#90d060" stroke-width="1"/>
<g stroke="#000" stroke-width="1.1" fill="none" stroke-linecap="square">
<path d="M577.5,12.5 H587.5 V23.5 H577.5 Z"/>
<path d="M579.5,15.3 L580.8,14.3 H584.8 L581.3,17.6 M581,16.6 H584.2 M581.6,18.3 L583.5,19.4 M580.7,20.6 H582.5 M582.5,22.5 H583.5"/>
<path d="M590.5,12.5 H599.5 V14.3 H590.5 M590.5,12.5 V21.8 L589.4,23.5 M592.2,16.6 H598.6 M590.2,19.3 H599.5 M593.7,19.6 L592.1,22.4 H599 M598,21 L599.3,23.3"/>
</g>
<text x="601.2" y="21.6" font-family="Liberation Sans" font-size="12.6" fill="#101418" transform="translate(601.2,0) scale(0.88,1) translate(-601.2,0)">0000</text>
<path d="M640.7,14.3 H645.3 L643,17.2 Z" fill="#333"/>
</svg>

</body></html>
